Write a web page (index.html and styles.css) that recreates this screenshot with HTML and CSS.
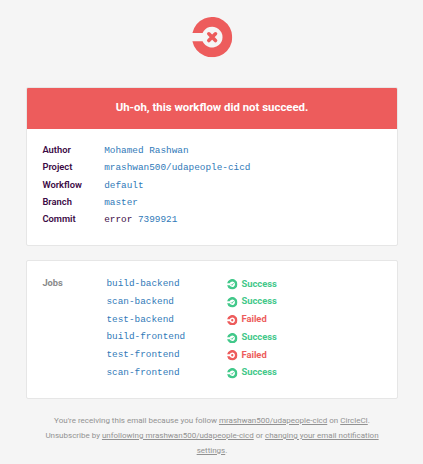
FILE: index.html
```html
<!DOCTYPE html>
<html lang="en">
<head>
<meta charset="utf-8">
<title>Workflow failed</title>
<link rel="stylesheet" href="styles.css">
</head>
<body>
<svg class="defs" width="0" height="0" aria-hidden="true">
  <symbol id="ring" viewBox="0 0 40 40">
    <path fill="currentColor" fill-rule="evenodd" d="M.4 16A20 20 0 1 1 .4 24H10.500A10.300 10.300 0 1 0 10.500 16Z"/>
  </symbol>
  <symbol id="fail" viewBox="0 0 40 40">
    <use href="#ring"/>
    <circle cx="20" cy="20" r="4.400" fill="currentColor"/>
  </symbol>
  <symbol id="ok" viewBox="0 0 40 40">
    <use href="#ring"/>
    <path stroke="currentColor" stroke-width="3.200" fill="none" d="M15 20l4 4 6-8"/>
  </symbol>
</svg>
<header class="logo"><svg class="logo-mark" viewBox="0 0 40 40"><use href="#ring"/><path class="logo-cross" d="M16.700 16.700l6.600 6.600M23.300 16.700l-6.600 6.600"/></svg></header>
<main>
  <section class="card summary">
    <h1 class="banner">Uh-oh, this workflow did not succeed.</h1>
    <dl class="details">
      <dt>Author</dt><dd><a>Mohamed Rashwan</a></dd>
      <dt>Project</dt><dd><a>mrashwan500/udapeople-cicd</a></dd>
      <dt>Workflow</dt><dd><a>default</a></dd>
      <dt>Branch</dt><dd><a>master</a></dd>
      <dt>Commit</dt><dd>error <a>7399921</a></dd>
    </dl>
  </section>
  <section class="card jobs">
    <h2 class="jobs-title">Jobs</h2>
    <ul class="job-list">
      <li><a>build-backend</a><span class="status ok"><svg class="icon"><use href="#ok"/></svg>Success</span></li>
      <li><a>scan-backend</a><span class="status ok"><svg class="icon"><use href="#ok"/></svg>Success</span></li>
      <li><a>test-backend</a><span class="status failed"><svg class="icon"><use href="#fail"/></svg>Failed</span></li>
      <li><a>build-frontend</a><span class="status ok"><svg class="icon"><use href="#ok"/></svg>Success</span></li>
      <li><a>test-frontend</a><span class="status failed"><svg class="icon"><use href="#fail"/></svg>Failed</span></li>
      <li><a>scan-frontend</a><span class="status ok"><svg class="icon"><use href="#ok"/></svg>Success</span></li>
    </ul>
  </section>
</main>
<footer class="footer">
  <p>You're receiving this email because you follow <a>mrashwan500/udapeople-cicd</a> on <a>CircleCI</a>.</p>
  <p>Unsubscribe by <a>unfollowing mrashwan500/udapeople-cicd</a> or <a>changing your email notification<br>settings</a>.</p>
</footer>
</body>
</html>
```
FILE: styles.css
```css
* { box-sizing: border-box; }
body {
  margin: 0;
  height: 464px;
  overflow: hidden;
  background: #f5f5f5;
  font-family: Roboto, "Liberation Sans", sans-serif;
  color: #343434;
}
.defs { display: block; }
.logo {
  height: 87px;
  padding: 17.400px 0 0 192.300px;
  color: #ed5c5c;
}
.logo-mark { display: block; width: 40.300px; height: 40.300px; }
.logo-cross { stroke: #ed5c5c; stroke-width: 3.600; stroke-linecap: round; }
main {
  display: flex;
  flex-direction: column;
  gap: 14px;
  width: 372px;
  margin-left: 26px;
}
.card {
  background: #fff;
  border: 1px solid #e6e6e6;
  border-radius: 2px;
}
.summary { height: 159px; overflow: hidden; }
.banner {
  height: 41px;
  margin: 0;
  background: #ed5c5c;
  color: #fff;
  font-size: 11.400px;
  font-weight: 700;
  line-height: 39px;
  text-align: center;
}
.details {
  display: grid;
  grid-template-columns: 61.800px 1fr;
  grid-auto-rows: 17.300px;
  margin: 0;
  padding: 13px 15.400px;
  line-height: 17px;
}
dt { font-size: 9.350px; font-weight: 600; line-height: 16.500px; color: #3b0a45; }
dd { margin: 0; color: #3b0a45; }
dd, .job-list a {
  font-family: "Courier New", "Liberation Mono", monospace;
  font-size: 9.400px;
}
.details a, .job-list a { color: #3079b8; }
.jobs {
  display: flex;
  height: 139px;
  padding: 14px 15.400px;
}
.jobs-title {
  width: 64px;
  margin: 0;
  color: #8a8a8a;
  font-size: 9.300px;
  font-weight: 700;
  line-height: 15px;
}
.job-list { margin: 0; padding: 0; list-style: none; }
.job-list li {
  display: grid;
  grid-template-columns: 121px 1fr;
  height: 17.800px;
  line-height: 17px;
}
.status {
  display: flex;
  align-items: center;
  gap: 3.500px;
  height: 16px;
  font-size: 9.400px;
  font-weight: 700;
}
.icon { width: 10.500px; height: 10.500px; margin-top: 3px; }
.ok { color: #42c88a; }
.failed { color: #ed5c5c; }
.footer {
  margin-top: 14px;
  padding-left: 10px;
  width: 414px;
  text-align: center;
  color: #929292;
  font-size: 8px;
  line-height: 15px;
}
.footer p { margin: 0; }
.footer a { text-decoration: underline; }
```
